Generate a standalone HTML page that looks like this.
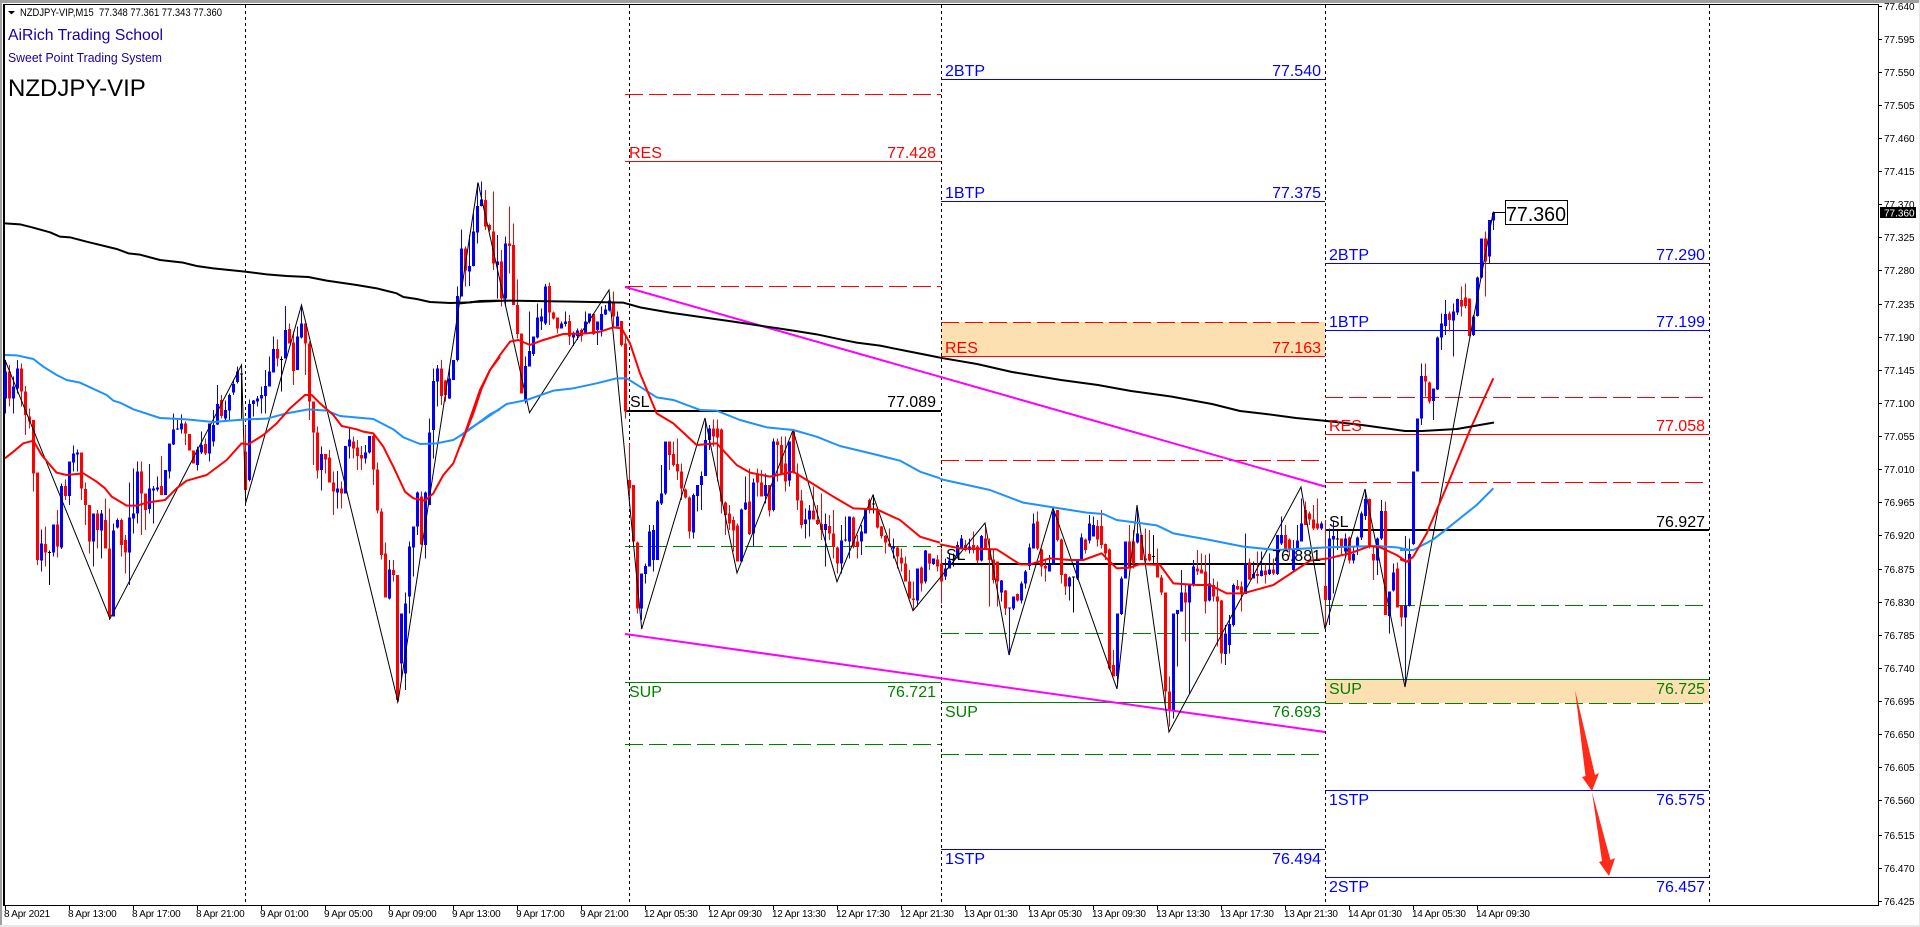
<!DOCTYPE html>
<html lang="en"><head><meta charset="utf-8"><title>NZDJPY-VIP,M15</title>
<style>html,body{margin:0;padding:0;background:#fff;overflow:hidden;width:1920px;height:927px}svg{display:block}text{font-family:"Liberation Sans",Arial,sans-serif;white-space:pre}.l{font-size:16px}.e{text-anchor:end}.p{font-size:10px;fill:#000}.t{font-size:10px;fill:#000;letter-spacing:-.25px}.r{fill:#f00}.b{fill:#00f}.g{fill:#008000}.k{fill:#000}</style></head>
<body>
<svg xmlns="http://www.w3.org/2000/svg" width="1920" height="927" viewBox="0 0 1920 927">
<rect width="1920" height="927" fill="#fff"/>
<!-- frame -->
<path d="M0 0H1920V3H0zM0 0H2V927H0z" fill="#a0a0a0"/>
<path d="M1919 0H1920V927H1919zM0 925H1920V927H0z" fill="#e8e8e8"/>
<path d="M3 4H1879V5H3zM3 4H5V906H3zM3 905H1879V906H3zM1878 4H1879V906H1878z" fill="#000" shape-rendering="crispEdges"/>
<!-- orange zones -->
<rect x="941" y="322" width="384" height="34" fill="#fde0b2"/>
<rect x="1325" y="679" width="384" height="24" fill="#fde0b2"/>
<!-- vertical separators -->
<path d="M245.5 5V905M629.5 5V905M941.5 5V905M1325.5 5V905M1709.5 5V905" stroke="#000" stroke-width="1" stroke-dasharray="3 3" fill="none" shape-rendering="crispEdges"/>
<!-- levels -->
<g fill="none" shape-rendering="crispEdges">
<path d="M625 94.5H941M625 286.5H941M941 322.5H1325M941 460.5H1325M1325 397.5H1709M1325 482.5H1709" stroke="#f00" stroke-dasharray="18 6"/>
<path d="M625 546.5H941M625 744.5H941M941 633.5H1325M941 754.5H1325M1325 605.5H1709M1325 703.5H1709" stroke="#008000" stroke-dasharray="18 6"/>
<path d="M625 161.5H941M941 356.5H1325M1325 434.5H1709" stroke="#f00"/>
<path d="M941 79.5H1325M941 201.5H1325M941 849.5H1325M1325 263.5H1709M1325 330.5H1709M1325 790.5H1709M1325 877.5H1709" stroke="#00f"/>
<path d="M625 682.5H941M941 702.5H1325M1325 679.5H1709" stroke="#008000"/>
<path d="M625 411H941M941 564H1325M1325 530H1709" stroke="#000" stroke-width="2"/>
</g>
<!-- candles region 1 -->
<g transform="translate(0,180) scale(1,.33333)" shape-rendering="crispEdges">
<path fill="#00f" d="M5 540h1V700h-1zM4 575h3V655h-3zM13 590h1V700h-1zM12 620h3V655h-3zM17 540h1V640h-1zM16 565h3V625h-3zM41 1048h1V1175h-1zM40 1090h3V1142h-3zM53 1033h1V1130h-1zM52 1033h3V1118h-3zM61 910h1V1107h-1zM60 918h3V1103h-3zM69 845h1V975h-1zM68 845h3V948h-3zM73 797h1V875h-1zM72 820h3V848h-3zM77 808h1V875h-1zM76 817h3V823h-3zM93 1000h1V1160h-1zM92 1000h3V1085h-3zM101 990h1V1135h-1zM100 1000h3V1052h-3zM113 1030h1V1310h-1zM112 1052h3V1310h-3zM117 1015h1V1045h-1zM116 1020h3V1042h-3zM129 908h1V1215h-1zM128 1012h3V1118h-3zM133 865h1V1060h-1zM132 1000h3V1015h-3zM137 845h1V1030h-1zM136 875h3V1000h-3zM149 852h1V1000h-1zM148 925h3V987h-3zM153 918h1V1030h-1zM152 925h3V932h-3zM157 890h1V935h-1zM156 923h3V928h-3zM165 870h1V945h-1zM164 870h3V945h-3zM169 790h1V895h-1zM168 790h3V875h-3zM173 700h1V795h-1zM172 748h3V793h-3zM177 720h1V750h-1zM176 745h3V749h-3zM181 703h1V760h-1zM180 730h3V748h-3zM197 800h1V872h-1zM196 808h3V855h-3zM201 755h1V822h-1zM200 795h3V818h-3zM209 730h1V845h-1zM208 730h3V820h-3zM213 690h1V800h-1zM212 735h3V785h-3zM217 615h1V735h-1zM216 672h3V733h-3zM225 662h1V720h-1zM224 690h3V715h-3zM229 640h1V720h-1zM228 645h3V692h-3zM233 600h1V645h-1zM232 612h3V638h-3zM237 560h1V610h-1zM236 575h3V606h-3zM249 658h1V905h-1zM248 672h3V900h-3zM253 660h1V710h-1zM252 662h3V672h-3zM257 648h1V680h-1zM256 655h3V665h-3zM261 620h1V700h-1zM260 645h3V655h-3zM265 570h1V700h-1zM264 618h3V648h-3zM269 530h1V620h-1zM268 575h3V620h-3zM273 470h1V578h-1zM272 507h3V578h-3zM285 378h1V535h-1zM284 450h3V535h-3zM297 440h1V570h-1zM296 470h3V570h-3zM301 380h1V475h-1zM300 430h3V473h-3zM321 800h1V932h-1zM320 822h3V870h-3zM337 873h1V985h-1zM336 925h3V938h-3zM345 798h1V940h-1zM344 798h3V940h-3zM349 745h1V835h-1zM348 778h3V800h-3zM365 795h1V850h-1zM364 817h3V835h-3zM369 768h1V820h-1zM368 768h3V817h-3zM389 1140h1V1258h-1zM388 1168h3V1255h-3zM401 1300h1V1500h-1zM400 1300h3V1450h-3zM405 1237h1V1530h-1zM404 1270h3V1480h-3zM409 1085h1V1300h-1zM408 1100h3V1250h-3zM413 1040h1V1190h-1zM412 1040h3V1103h-3zM417 935h1V1065h-1zM416 937h3V1040h-3zM425 935h1V1135h-1zM424 937h3V1095h-3zM429 715h1V975h-1zM428 757h3V975h-3zM433 565h1V835h-1zM432 603h3V750h-3zM437 555h1V680h-1zM436 565h3V605h-3zM449 565h1V657h-1zM448 595h3V655h-3zM453 540h1V600h-1zM452 540h3V600h-3zM457 320h1V545h-1zM456 348h3V540h-3zM461 148h1V330h-1zM460 205h3V350h-3zM469 165h1V318h-1zM468 258h3V275h-3zM473 100h1V260h-1zM472 155h3V258h-3zM477 10h1V190h-1zM476 78h3V158h-3zM481 5h1V80h-1zM480 58h3V78h-3zM497 165h1V355h-1zM496 245h3V255h-3zM505 170h1V380h-1zM504 190h3V355h-3zM525 530h1V670h-1zM524 558h3V665h-3zM529 395h1V525h-1zM528 513h3V560h-3zM533 470h1V528h-1zM532 470h3V522h-3zM537 370h1V475h-1zM536 412h3V472h-3zM541 385h1V450h-1zM540 410h3V425h-3zM545 312h1V435h-1zM544 320h3V430h-3zM561 425h1V445h-1zM560 430h3V445h-3zM565 395h1V440h-1zM564 425h3V432h-3zM573 455h1V498h-1zM572 462h3V472h-3zM577 445h1V480h-1zM576 452h3V468h-3zM585 395h1V460h-1zM584 425h3V458h-3zM589 400h1V430h-1zM588 400h3V425h-3zM597 425h1V495h-1zM596 425h3V450h-3zM601 380h1V470h-1zM600 402h3V450h-3zM605 375h1V405h-1zM604 388h3V403h-3zM609 350h1V395h-1zM608 362h3V392h-3zM617 395h1V440h-1zM616 410h3V440h-3zM641 1180h1V1320h-1zM640 1180h3V1285h-3zM645 1150h1V1210h-1zM644 1158h3V1182h-3zM649 1035h1V1160h-1zM648 1055h3V1160h-3zM653 1035h1V1175h-1zM652 1050h3V1140h-3zM657 960h1V1140h-1zM656 965h3V1140h-3zM661 855h1V975h-1zM660 940h3V970h-3zM665 785h1V945h-1zM664 785h3V940h-3zM693 940h1V1075h-1zM692 945h3V1058h-3zM697 915h1V995h-1zM696 915h3V948h-3zM701 875h1V990h-1zM700 888h3V915h-3zM705 720h1V880h-1zM704 780h3V888h-3zM709 735h1V810h-1zM708 745h3V780h-3zM741 985h1V1145h-1zM740 988h3V1145h-3zM745 890h1V990h-1zM744 968h3V988h-3zM753 895h1V1100h-1zM752 908h3V1060h-3zM765 880h1V970h-1zM764 915h3V948h-3zM773 775h1V995h-1zM772 785h3V990h-3zM789 785h1V920h-1zM788 785h3V902h-3zM805 985h1V1075h-1zM804 1018h3V1032h-3zM809 975h1V1070h-1zM808 992h3V1018h-3zM825 1000h1V1160h-1zM824 1032h3V1050h-3zM841 1035h1V1180h-1zM840 1082h3V1150h-3zM845 1010h1V1085h-1zM844 1078h3V1082h-3zM849 1010h1V1135h-1zM848 1010h3V1085h-3zM861 1035h1V1125h-1zM860 1055h3V1085h-3zM865 985h1V1060h-1zM864 985h3V1060h-3zM893 1075h1V1135h-1zM892 1100h3V1105h-3z"/>
<path fill="#f00" d="M9 555h1V680h-1zM8 575h3V655h-3zM21 550h1V680h-1zM20 565h3V635h-3zM25 618h1V765h-1zM24 635h3V705h-3zM29 685h1V745h-1zM28 710h3V725h-3zM33 720h1V935h-1zM32 720h3V880h-3zM37 878h1V1155h-1zM36 878h3V1140h-3zM45 1040h1V1160h-1zM44 1092h3V1118h-3zM57 990h1V1132h-1zM56 1033h3V1100h-3zM65 898h1V960h-1zM64 918h3V948h-3zM81 817h1V960h-1zM80 817h3V925h-3zM85 908h1V1035h-1zM84 927h3V975h-3zM89 975h1V1120h-1zM88 975h3V1085h-3zM97 990h1V1105h-1zM96 1000h3V1050h-3zM105 955h1V1105h-1zM104 1020h3V1105h-3zM109 985h1V1320h-1zM108 1105h3V1310h-3zM121 1015h1V1130h-1zM120 1020h3V1095h-3zM125 1065h1V1180h-1zM124 1080h3V1118h-3zM141 845h1V1065h-1zM140 875h3V940h-3zM145 940h1V1050h-1zM144 940h3V990h-3zM161 828h1V945h-1zM160 918h3V945h-3zM185 725h1V795h-1zM184 730h3V760h-3zM189 762h1V812h-1zM188 762h3V812h-3zM193 812h1V850h-1zM192 812h3V850h-3zM205 775h1V825h-1zM204 792h3V820h-3zM221 645h1V715h-1zM220 660h3V708h-3zM245 740h1V935h-1zM244 815h3V930h-3zM277 478h1V560h-1zM276 507h3V535h-3zM289 430h1V490h-1zM288 447h3V490h-3zM293 455h1V615h-1zM292 487h3V573h-3zM305 430h1V585h-1zM304 430h3V490h-3zM309 485h1V720h-1zM308 490h3V665h-3zM313 665h1V855h-1zM312 665h3V758h-3zM317 740h1V895h-1zM316 757h3V872h-3zM325 822h1V880h-1zM324 822h3V838h-3zM329 810h1V905h-1zM328 832h3V908h-3zM333 875h1V1005h-1zM332 907h3V935h-3zM341 905h1V985h-1zM340 925h3V940h-3zM353 770h1V835h-1zM352 785h3V805h-3zM357 780h1V870h-1zM356 802h3V828h-3zM361 798h1V870h-1zM360 825h3V835h-3zM373 760h1V915h-1zM372 768h3V868h-3zM377 848h1V1000h-1zM376 868h3V992h-3zM381 985h1V1138h-1zM380 995h3V1125h-3zM385 1088h1V1250h-1zM384 1120h3V1253h-3zM393 1140h1V1205h-1zM392 1170h3V1185h-3zM397 1185h1V1570h-1zM396 1185h3V1560h-3zM421 935h1V1095h-1zM420 950h3V1093h-3zM441 540h1V675h-1zM440 565h3V648h-3zM445 600h1V665h-1zM444 602h3V645h-3zM465 200h1V320h-1zM464 205h3V272h-3zM485 30h1V150h-1zM484 60h3V140h-3zM489 130h1V155h-1zM488 135h3V150h-3zM493 35h1V270h-1zM492 155h3V250h-3zM501 210h1V380h-1zM500 245h3V355h-3zM509 80h1V280h-1zM508 190h3V198h-3zM513 130h1V375h-1zM512 195h3V375h-3zM517 298h1V475h-1zM516 375h3V462h-3zM521 460h1V640h-1zM520 460h3V640h-3zM549 307h1V435h-1zM548 318h3V398h-3zM553 395h1V418h-1zM552 397h3V415h-3zM557 412h1V460h-1zM556 412h3V445h-3zM569 405h1V495h-1zM568 423h3V470h-3zM581 445h1V485h-1zM580 450h3V468h-3zM593 400h1V465h-1zM592 402h3V462h-3zM613 335h1V440h-1zM612 365h3V410h-3zM621 425h1V500h-1zM620 423h3V495h-3zM625 465h1V715h-1zM624 490h3V695h-3zM629 790h1V950h-1zM628 900h3V925h-3zM633 915h1V1090h-1zM632 915h3V1085h-3zM637 1085h1V1300h-1zM636 1087h3V1285h-3zM669 785h1V870h-1zM668 785h3V825h-3zM673 785h1V860h-1zM672 822h3V855h-3zM677 775h1V900h-1zM676 852h3V875h-3zM681 850h1V960h-1zM680 875h3V925h-3zM685 925h1V955h-1zM684 928h3V952h-3zM689 950h1V1075h-1zM688 953h3V1055h-3zM713 718h1V800h-1zM712 745h3V770h-3zM717 718h1V905h-1zM716 745h3V772h-3zM721 745h1V1000h-1zM720 748h3V965h-3zM725 965h1V1065h-1zM724 968h3V1005h-3zM729 975h1V1050h-1zM728 1000h3V1030h-3zM733 1010h1V1115h-1zM732 1020h3V1052h-3zM737 1030h1V1145h-1zM736 1037h3V1145h-3zM749 865h1V1065h-1zM748 965h3V1062h-3zM757 865h1V950h-1zM756 880h3V908h-3zM761 870h1V950h-1zM760 908h3V950h-3zM769 915h1V1010h-1zM768 915h3V992h-3zM777 775h1V905h-1zM776 785h3V795h-3zM781 770h1V880h-1zM780 795h3V880h-3zM785 770h1V935h-1zM784 850h3V905h-3zM793 755h1V880h-1zM792 755h3V875h-3zM797 850h1V990h-1zM796 880h3V962h-3zM801 930h1V1045h-1zM800 962h3V1035h-3zM813 920h1V1015h-1zM812 992h3V1018h-3zM817 975h1V1035h-1zM816 1020h3V1032h-3zM821 940h1V1080h-1zM820 1032h3V1050h-3zM829 1005h1V1080h-1zM828 1038h3V1060h-3zM833 990h1V1135h-1zM832 1060h3V1100h-3zM837 1100h1V1180h-1zM836 1102h3V1150h-3zM853 1010h1V1105h-1zM852 1012h3V1100h-3zM857 1065h1V1135h-1zM856 1085h3V1100h-3zM869 955h1V1000h-1zM868 960h3V985h-3zM877 990h1V1045h-1zM876 990h3V1042h-3zM881 1038h1V1075h-1zM880 1040h3V1068h-3zM885 1065h1V1120h-1zM884 1068h3V1088h-3zM889 1045h1V1100h-1zM888 1090h3V1100h-3zM897 1100h1V1165h-1zM896 1102h3V1130h-3zM901 1105h1V1175h-1zM900 1132h3V1150h-3zM905 1130h1V1190h-1zM904 1150h3V1205h-3zM909 1170h1V1255h-1zM908 1205h3V1255h-3z"/>
<path fill="#000" d="M49 1112h1V1215h-1zM48 1116h3V1119h-3zM241 580h1V720h-1zM240 581h3V584h-3zM281 530h1V635h-1zM280 537h3V540h-3zM873 945h1V1000h-1zM872 970h3V973h-3z"/>
</g>
<!-- candles region 2 -->
<g transform="translate(0,470) scale(1,.33333)" shape-rendering="crispEdges">
<path fill="#00f" d="M917 295h1V410h-1zM916 296h3V392h-3zM925 240h1V340h-1zM924 242h3V335h-3zM933 265h1V285h-1zM932 265h3V282h-3zM945 265h1V330h-1zM944 295h3V320h-3zM949 250h1V295h-1zM948 272h3V295h-3zM957 215h1V265h-1zM956 225h3V260h-3zM961 195h1V235h-1zM960 205h3V232h-3zM969 205h1V250h-1zM968 230h3V240h-3zM981 195h1V275h-1zM980 198h3V272h-3zM1001 330h1V395h-1zM1000 332h3V368h-3zM1009 412h1V555h-1zM1008 412h3V415h-3zM1013 380h1V420h-1zM1012 380h3V416h-3zM1021 335h1V400h-1zM1020 340h3V392h-3zM1025 300h1V355h-1zM1024 305h3V340h-3zM1029 220h1V300h-1zM1028 232h3V288h-3zM1033 130h1V235h-1zM1032 160h3V235h-3zM1049 255h1V295h-1zM1048 285h3V305h-3zM1053 115h1V285h-1zM1052 125h3V280h-3zM1069 320h1V392h-1zM1068 322h3V350h-3zM1077 270h1V330h-1zM1076 270h3V325h-3zM1081 190h1V270h-1zM1080 202h3V272h-3zM1089 135h1V220h-1zM1088 160h3V212h-3zM1093 140h1V200h-1zM1092 165h3V200h-3zM1117 430h1V650h-1zM1116 430h3V618h-3zM1121 320h1V435h-1zM1120 325h3V432h-3zM1125 215h1V325h-1zM1124 215h3V325h-3zM1137 120h1V220h-1zM1136 190h3V218h-3zM1173 430h1V745h-1zM1172 430h3V725h-3zM1177 420h1V590h-1zM1176 420h3V432h-3zM1181 300h1V425h-1zM1180 368h3V425h-3zM1189 350h1V670h-1zM1188 345h3V398h-3zM1193 270h1V350h-1zM1192 290h3V345h-3zM1209 250h1V395h-1zM1208 340h3V392h-3zM1225 465h1V585h-1zM1224 490h3V552h-3zM1229 435h1V550h-1zM1228 462h3V525h-3zM1233 340h1V470h-1zM1232 345h3V465h-3zM1245 190h1V370h-1zM1244 280h3V372h-3zM1253 275h1V325h-1zM1252 312h3V325h-3zM1261 245h1V320h-1zM1260 302h3V318h-3zM1269 250h1V315h-1zM1268 298h3V312h-3zM1277 205h1V315h-1zM1276 195h3V312h-3zM1281 140h1V225h-1zM1280 195h3V220h-3zM1293 210h1V305h-1zM1292 235h3V300h-3zM1297 165h1V240h-1zM1296 212h3V240h-3zM1301 85h1V215h-1zM1300 160h3V215h-3zM1321 155h1V180h-1zM1320 160h3V175h-3z"/>
<path fill="#f00" d="M913 335h1V420h-1zM912 385h3V390h-3zM921 290h1V365h-1zM920 292h3V340h-3zM929 250h1V300h-1zM928 250h3V280h-3zM937 255h1V305h-1zM936 268h3V290h-3zM941 235h1V400h-1zM940 280h3V335h-3zM965 210h1V245h-1zM964 225h3V240h-3zM973 185h1V250h-1zM972 225h3V240h-3zM977 225h1V280h-1zM976 230h3V272h-3zM985 165h1V240h-1zM984 205h3V238h-3zM989 205h1V410h-1zM988 238h3V270h-3zM993 240h1V340h-1zM992 268h3V330h-3zM997 275h1V410h-1zM996 275h3V335h-3zM1005 360h1V435h-1zM1004 362h3V415h-3zM1017 370h1V395h-1zM1016 372h3V392h-3zM1037 125h1V240h-1zM1036 155h3V235h-3zM1041 235h1V320h-1zM1040 238h3V290h-3zM1045 270h1V335h-1zM1044 288h3V295h-3zM1057 120h1V215h-1zM1056 120h3V210h-3zM1061 205h1V340h-1zM1060 208h3V315h-3zM1065 310h1V375h-1zM1064 312h3V350h-3zM1085 205h1V250h-1zM1084 208h3V240h-3zM1097 150h1V230h-1zM1096 168h3V208h-3zM1101 120h1V235h-1zM1100 168h3V225h-3zM1105 220h1V270h-1zM1104 222h3V250h-3zM1109 235h1V600h-1zM1108 238h3V595h-3zM1113 540h1V620h-1zM1112 585h3V620h-3zM1129 165h1V295h-1zM1128 215h3V295h-3zM1133 180h1V295h-1zM1132 215h3V282h-3zM1141 195h1V270h-1zM1140 195h3V270h-3zM1145 175h1V285h-1zM1144 265h3V272h-3zM1149 180h1V275h-1zM1148 252h3V272h-3zM1157 235h1V320h-1zM1156 282h3V322h-3zM1161 315h1V375h-1zM1160 322h3V368h-3zM1165 368h1V700h-1zM1164 368h3V665h-3zM1169 620h1V770h-1zM1168 665h3V722h-3zM1185 340h1V515h-1zM1184 368h3V398h-3zM1197 240h1V315h-1zM1196 295h3V305h-3zM1201 250h1V310h-1zM1200 298h3V310h-3zM1205 255h1V430h-1zM1204 305h3V395h-3zM1213 325h1V395h-1zM1212 345h3V380h-3zM1217 335h1V530h-1zM1216 380h3V395h-3zM1221 390h1V580h-1zM1220 392h3V550h-3zM1237 330h1V360h-1zM1236 348h3V358h-3zM1241 335h1V425h-1zM1240 350h3V370h-3zM1249 265h1V330h-1zM1248 278h3V328h-3zM1257 245h1V340h-1zM1256 312h3V318h-3zM1265 280h1V340h-1zM1264 302h3V315h-3zM1273 265h1V315h-1zM1272 298h3V310h-3zM1285 165h1V235h-1zM1284 195h3V235h-3zM1289 205h1V260h-1zM1288 208h3V235h-3zM1305 95h1V165h-1zM1304 120h3V165h-3zM1309 125h1V165h-1zM1308 130h3V148h-3zM1313 105h1V180h-1zM1312 148h3V175h-3zM1317 85h1V180h-1zM1316 160h3V175h-3z"/>
<path fill="#000" d="M953 250h1V290h-1zM952 268h3V271h-3zM1073 320h1V428h-1zM1072 320h3V323h-3zM1153 195h1V280h-1zM1152 258h3V261h-3z"/>
</g>
<!-- candles region 3 -->
<g transform="translate(0,200) scale(1,.33333)" shape-rendering="crispEdges">
<path fill="#00f" d="M1329 985h1V1275h-1zM1328 1015h3V1200h-3zM1333 965h1V1180h-1zM1332 1008h3V1018h-3zM1345 1000h1V1070h-1zM1344 1015h3V1055h-3zM1353 1040h1V1090h-1zM1352 1062h3V1082h-3zM1357 1010h1V1065h-1zM1356 1012h3V1040h-3zM1361 935h1V1020h-1zM1360 940h3V1012h-3zM1365 870h1V960h-1zM1364 897h3V948h-3zM1377 1012h1V1125h-1zM1376 1015h3V1082h-3zM1381 900h1V1020h-1zM1380 933h3V1015h-3zM1389 1175h1V1300h-1zM1388 1175h3V1248h-3zM1393 1090h1V1175h-1zM1392 1118h3V1172h-3zM1405 1008h1V1450h-1zM1404 1218h3V1252h-3zM1409 1015h1V1220h-1zM1408 1062h3V1218h-3zM1413 815h1V1035h-1zM1412 815h3V1032h-3zM1417 700h1V815h-1zM1416 655h3V815h-3zM1421 490h1V675h-1zM1420 528h3V655h-3zM1433 565h1V660h-1zM1432 565h3V603h-3zM1437 410h1V570h-1zM1436 412h3V568h-3zM1441 340h1V450h-1zM1440 370h3V413h-3zM1445 300h1V405h-1zM1444 342h3V378h-3zM1453 310h1V470h-1zM1452 335h3V362h-3zM1457 295h1V345h-1zM1456 297h3V338h-3zM1473 345h1V408h-1zM1472 350h3V405h-3zM1477 230h1V350h-1zM1476 232h3V348h-3zM1481 115h1V235h-1zM1480 115h3V232h-3zM1489 60h1V190h-1zM1488 60h3V170h-3zM1493 35h1V90h-1zM1492 38h3V62h-3z"/>
<path fill="#f00" d="M1325 960h1V1280h-1zM1324 1158h3V1200h-3zM1341 1015h1V1065h-1zM1340 1015h3V1040h-3zM1349 1010h1V1090h-1zM1348 1012h3V1082h-3zM1369 895h1V1045h-1zM1368 897h3V1040h-3zM1373 1040h1V1140h-1zM1372 1062h3V1082h-3zM1385 905h1V1245h-1zM1384 933h3V1245h-3zM1397 1088h1V1222h-1zM1396 1105h3V1222h-3zM1401 1215h1V1280h-1zM1400 1218h3V1252h-3zM1425 490h1V590h-1zM1424 528h3V545h-3zM1429 545h1V610h-1zM1428 548h3V605h-3zM1449 335h1V395h-1zM1448 340h3V360h-3zM1461 260h1V350h-1zM1460 300h3V320h-3zM1465 250h1V325h-1zM1464 292h3V318h-3zM1469 295h1V410h-1zM1468 295h3V408h-3zM1485 95h1V290h-1zM1484 115h3V185h-3z"/>
<path fill="#000" d="M1337 990h1V1050h-1zM1336 1015h3V1018h-3z"/>
</g>
<!-- trend lines -->
<path d="M625 287L1325 486.5M625 634L1325 732" stroke="#f0f" stroke-width="2" fill="none"/>
<!-- zigzag -->
<polyline fill="none" stroke="#000" stroke-width="1" points="5,360 110,618.7 241.5,365 245.7,503 301.5,305 398,702 478,182.5 529.5,412.7 609,290 641.7,629 705,418 737,573 793,430 837,581.7 873,495 913,610.7 985,523 1009,655 1053,508 1117,689 1137,505 1169,732 1301,487 1325,629 1365,489 1405,687 1493,213"/>
<!-- moving averages -->
<g fill="none" stroke-linejoin="round" stroke-linecap="butt">
<g transform="translate(0,180) scale(.33333)" stroke-width="6">
<polyline stroke="#000" points="15,130 60,133 100,143 150,157 180,170 210,172 260,185 350,207 385,220 420,224 480,240 550,248 590,258 640,265 735,275 800,283 860,288 925,291 980,302 1070,315 1130,325 1190,340 1210,351 1250,357 1290,366 1350,369 1410,367 1440,363 1500,362"/>
<polyline stroke="#1e90ff" points="15,525 50,526 100,537 130,560 170,585 200,600 240,608 320,645 340,662 360,668 400,688 480,714 560,718 640,726 690,722 740,718 800,716 860,700 925,688 980,692 1020,708 1120,717 1180,748 1210,772 1260,792 1310,790 1360,780 1400,755 1440,725 1470,703 1500,688"/>
<polyline stroke="#f00" points="15,835 40,815 70,790 100,782 125,825 150,855 170,878 200,885 250,880 290,905 315,925 335,950 380,977 410,977 440,968 495,960 530,925 560,902 620,885 680,840 725,790 745,793 790,765 830,730 870,685 915,645 935,645 960,670 1000,705 1025,738 1070,748 1090,755 1120,760 1150,800 1180,860 1215,935 1240,955 1275,962 1300,940 1330,885 1360,850 1400,745 1440,630 1470,570 1500,530"/>
</g>
<g transform="translate(440,180) scale(.33333)" stroke-width="6">
<polyline stroke="#000" points="60,370 100,366 200,362 400,365 550,368 600,382 690,398 790,412 880,425 1000,443 1060,452 1130,463 1200,478 1250,488 1320,497 1400,513 1440,521 1500,533"/>
<polyline stroke="#1e90ff" points="60,768 80,752 130,720 200,672 260,660 340,632 400,625 470,610 530,595 560,595 600,620 650,652 700,660 780,690 830,692 900,720 980,742 1060,750 1130,770 1200,798 1300,822 1380,842 1440,875 1500,895"/>
<polyline stroke="#f00" points="60,800 100,700 125,625 150,570 180,525 210,485 235,480 270,495 310,480 370,462 440,460 480,455 520,442 545,445 570,490 600,580 650,700 700,730 770,795 830,790 890,855 930,878 990,890 1060,875 1100,900 1180,950 1240,985 1310,988 1380,1020 1440,1070 1500,1088"/>
</g>
<g transform="translate(910,470) scale(.33333)" stroke-width="6">
<polyline stroke="#1e90ff" points="90,27 240,60 340,98 430,112 530,128 580,132 620,150 740,166 790,190 900,210 1000,230 1100,240 1250,232 1400,228 1460,232 1500,240"/>
<polyline stroke="#f00" points="90,223 150,235 260,238 330,283 360,283 420,265 480,270 520,270 575,250 600,275 620,295 660,293 690,282 750,285 790,340 860,345 900,345 950,370 1000,370 1090,345 1200,272 1255,265 1320,250 1380,228 1410,232 1460,255 1490,275 1500,275"/>
</g>
<g transform="translate(1300,200) scale(.33333)" stroke-width="6">
<polyline stroke="#1e90ff" points="300,1050 340,1050 400,1018 430,995 530,915 580,865"/>
<polyline stroke="#f00" points="300,1078 320,1085 340,1070 380,1000 440,860 510,690 550,600 580,535"/>
</g>
<polyline stroke="#000" stroke-width="2" points="940,357.7 977,364 1012,372 1061,380 1098,385 1131,391 1171,396.5 1212,404 1240,411 1266,414 1296,418 1327,421 1362,425 1405,431 1422,431 1457,429 1494,422.5"/>
</g>
<!-- arrows -->
<polygon fill="#ff2a1a" points="1575,690 1595,775 1599,773 1592,791 1582,777 1585.5,776"/>
<polygon fill="#ff2a1a" points="1592,792 1610.5,860 1615,858 1609,876 1599,862 1602,861"/>
<!-- labels block 1 -->
<text class="l r" x="629" y="158">RES</text><text class="l r e" x="936" y="158">77.428</text>
<text class="l k" x="630" y="407">SL</text><text class="l k e" x="936" y="407">77.089</text>
<text class="l g" x="629" y="697">SUP</text><text class="l g e" x="936" y="697">76.721</text>
<!-- labels block 2 -->
<text class="l b" x="945" y="76">2BTP</text><text class="l b e" x="1321" y="76">77.540</text>
<text class="l b" x="945" y="198">1BTP</text><text class="l b e" x="1321" y="198">77.375</text>
<text class="l r" x="945" y="353">RES</text><text class="l r e" x="1321" y="353">77.163</text>
<text class="l k" x="946" y="560">SL</text><text class="l k e" x="1321" y="561">76.881</text>
<text class="l g" x="945" y="717">SUP</text><text class="l g e" x="1321" y="717">76.693</text>
<text class="l b" x="945" y="864">1STP</text><text class="l b e" x="1321" y="864">76.494</text>
<!-- labels block 3 -->
<text class="l b" x="1329" y="260">2BTP</text><text class="l b e" x="1705" y="260">77.290</text>
<text class="l b" x="1329" y="327">1BTP</text><text class="l b e" x="1705" y="327">77.199</text>
<text class="l r" x="1329" y="431">RES</text><text class="l r e" x="1705" y="431">77.058</text>
<text class="l k" x="1329" y="527">SL</text><text class="l k e" x="1705" y="527">76.927</text>
<text class="l g" x="1329" y="694">SUP</text><text class="l g e" x="1705" y="694">76.725</text>
<text class="l b" x="1329" y="805">1STP</text><text class="l b e" x="1705" y="805">76.575</text>
<text class="l b" x="1329" y="892">2STP</text><text class="l b e" x="1705" y="892">76.457</text>
<!-- current price tag -->
<path d="M1493 212.5H1505" stroke="#000" shape-rendering="crispEdges"/>
<rect x="1505.5" y="200.5" width="62" height="24" fill="#fff" stroke="#000"/>
<text x="1506" y="221" font-size="20" fill="#000" textLength="60" lengthAdjust="spacingAndGlyphs">77.360</text>
<!-- header -->
<polygon points="8,11 15,11 11.5,14.5" fill="#000"/>
<text x="20" y="16" font-size="11" fill="#000" textLength="202" lengthAdjust="spacingAndGlyphs">NZDJPY-VIP,M15  77.348 77.361 77.343 77.360</text>
<text x="8" y="40" font-size="16" fill="#1800a8" textLength="155" lengthAdjust="spacingAndGlyphs">AiRich Trading School</text>
<text x="8" y="62" font-size="13" fill="#1800a8" textLength="154" lengthAdjust="spacingAndGlyphs">Sweet Point Trading System</text>
<text x="8" y="96" font-size="24" fill="#000">NZDJPY-VIP</text>
<!-- price axis ticks -->
<path stroke="#000" shape-rendering="crispEdges" d="M1878 6.5h4M1878 39.5h4M1878 72.5h4M1878 105.5h4M1878 138.5h4M1878 171.5h4M1878 204.5h4M1878 237.5h4M1878 270.5h4M1878 304.5h4M1878 337.5h4M1878 370.5h4M1878 403.5h4M1878 436.5h4M1878 469.5h4M1878 502.5h4M1878 535.5h4M1878 569.5h4M1878 602.5h4M1878 635.5h4M1878 668.5h4M1878 701.5h4M1878 734.5h4M1878 767.5h4M1878 800.5h4M1878 835.5h4M1878 868.5h4M1878 901.5h4"/>
<g class="p">
<text class="p" x="1884" y="10">77.640</text><text class="p" x="1884" y="43">77.595</text><text class="p" x="1884" y="76">77.550</text><text class="p" x="1884" y="109">77.505</text><text class="p" x="1884" y="142">77.460</text><text class="p" x="1884" y="175">77.415</text><text class="p" x="1884" y="208">77.370</text><text class="p" x="1884" y="241">77.325</text><text class="p" x="1884" y="274">77.280</text><text class="p" x="1884" y="308">77.235</text><text class="p" x="1884" y="341">77.190</text><text class="p" x="1884" y="374">77.145</text><text class="p" x="1884" y="407">77.100</text><text class="p" x="1884" y="440">77.055</text><text class="p" x="1884" y="473">77.010</text><text class="p" x="1884" y="506">76.965</text><text class="p" x="1884" y="539">76.920</text><text class="p" x="1884" y="573">76.875</text><text class="p" x="1884" y="606">76.830</text><text class="p" x="1884" y="639">76.785</text><text class="p" x="1884" y="672">76.740</text><text class="p" x="1884" y="705">76.695</text><text class="p" x="1884" y="738">76.650</text><text class="p" x="1884" y="771">76.605</text><text class="p" x="1884" y="804">76.560</text><text class="p" x="1884" y="839">76.515</text><text class="p" x="1884" y="872">76.470</text><text class="p" x="1884" y="905">76.425</text>
</g>
<rect x="1880" y="207" width="36" height="11" fill="#000"/>
<text x="1884" y="216.5" font-size="10" fill="#fff">77.360</text>
<!-- time axis -->
<path stroke="#000" shape-rendering="crispEdges" d="M5.5 906v4M69.5 906v4M133.5 906v4M197.5 906v4M261.5 906v4M325.5 906v4M389.5 906v4M453.5 906v4M517.5 906v4M581.5 906v4M645.5 906v4M709.5 906v4M773.5 906v4M837.5 906v4M901.5 906v4M965.5 906v4M1029.5 906v4M1093.5 906v4M1157.5 906v4M1221.5 906v4M1285.5 906v4M1349.5 906v4M1413.5 906v4M1477.5 906v4"/>
<text class="t" x="4" y="917">8 Apr 2021</text><text class="t" x="68" y="917">8 Apr 13:00</text><text class="t" x="132" y="917">8 Apr 17:00</text><text class="t" x="196" y="917">8 Apr 21:00</text><text class="t" x="260" y="917">9 Apr 01:00</text><text class="t" x="324" y="917">9 Apr 05:00</text><text class="t" x="388" y="917">9 Apr 09:00</text><text class="t" x="452" y="917">9 Apr 13:00</text><text class="t" x="516" y="917">9 Apr 17:00</text><text class="t" x="580" y="917">9 Apr 21:00</text><text class="t" x="644" y="917">12 Apr 05:30</text><text class="t" x="708" y="917">12 Apr 09:30</text><text class="t" x="772" y="917">12 Apr 13:30</text><text class="t" x="836" y="917">12 Apr 17:30</text><text class="t" x="900" y="917">12 Apr 21:30</text><text class="t" x="964" y="917">13 Apr 01:30</text><text class="t" x="1028" y="917">13 Apr 05:30</text><text class="t" x="1092" y="917">13 Apr 09:30</text><text class="t" x="1156" y="917">13 Apr 13:30</text><text class="t" x="1220" y="917">13 Apr 17:30</text><text class="t" x="1284" y="917">13 Apr 21:30</text><text class="t" x="1348" y="917">14 Apr 01:30</text><text class="t" x="1412" y="917">14 Apr 05:30</text><text class="t" x="1476" y="917">14 Apr 09:30</text>
</svg>
</body></html>
